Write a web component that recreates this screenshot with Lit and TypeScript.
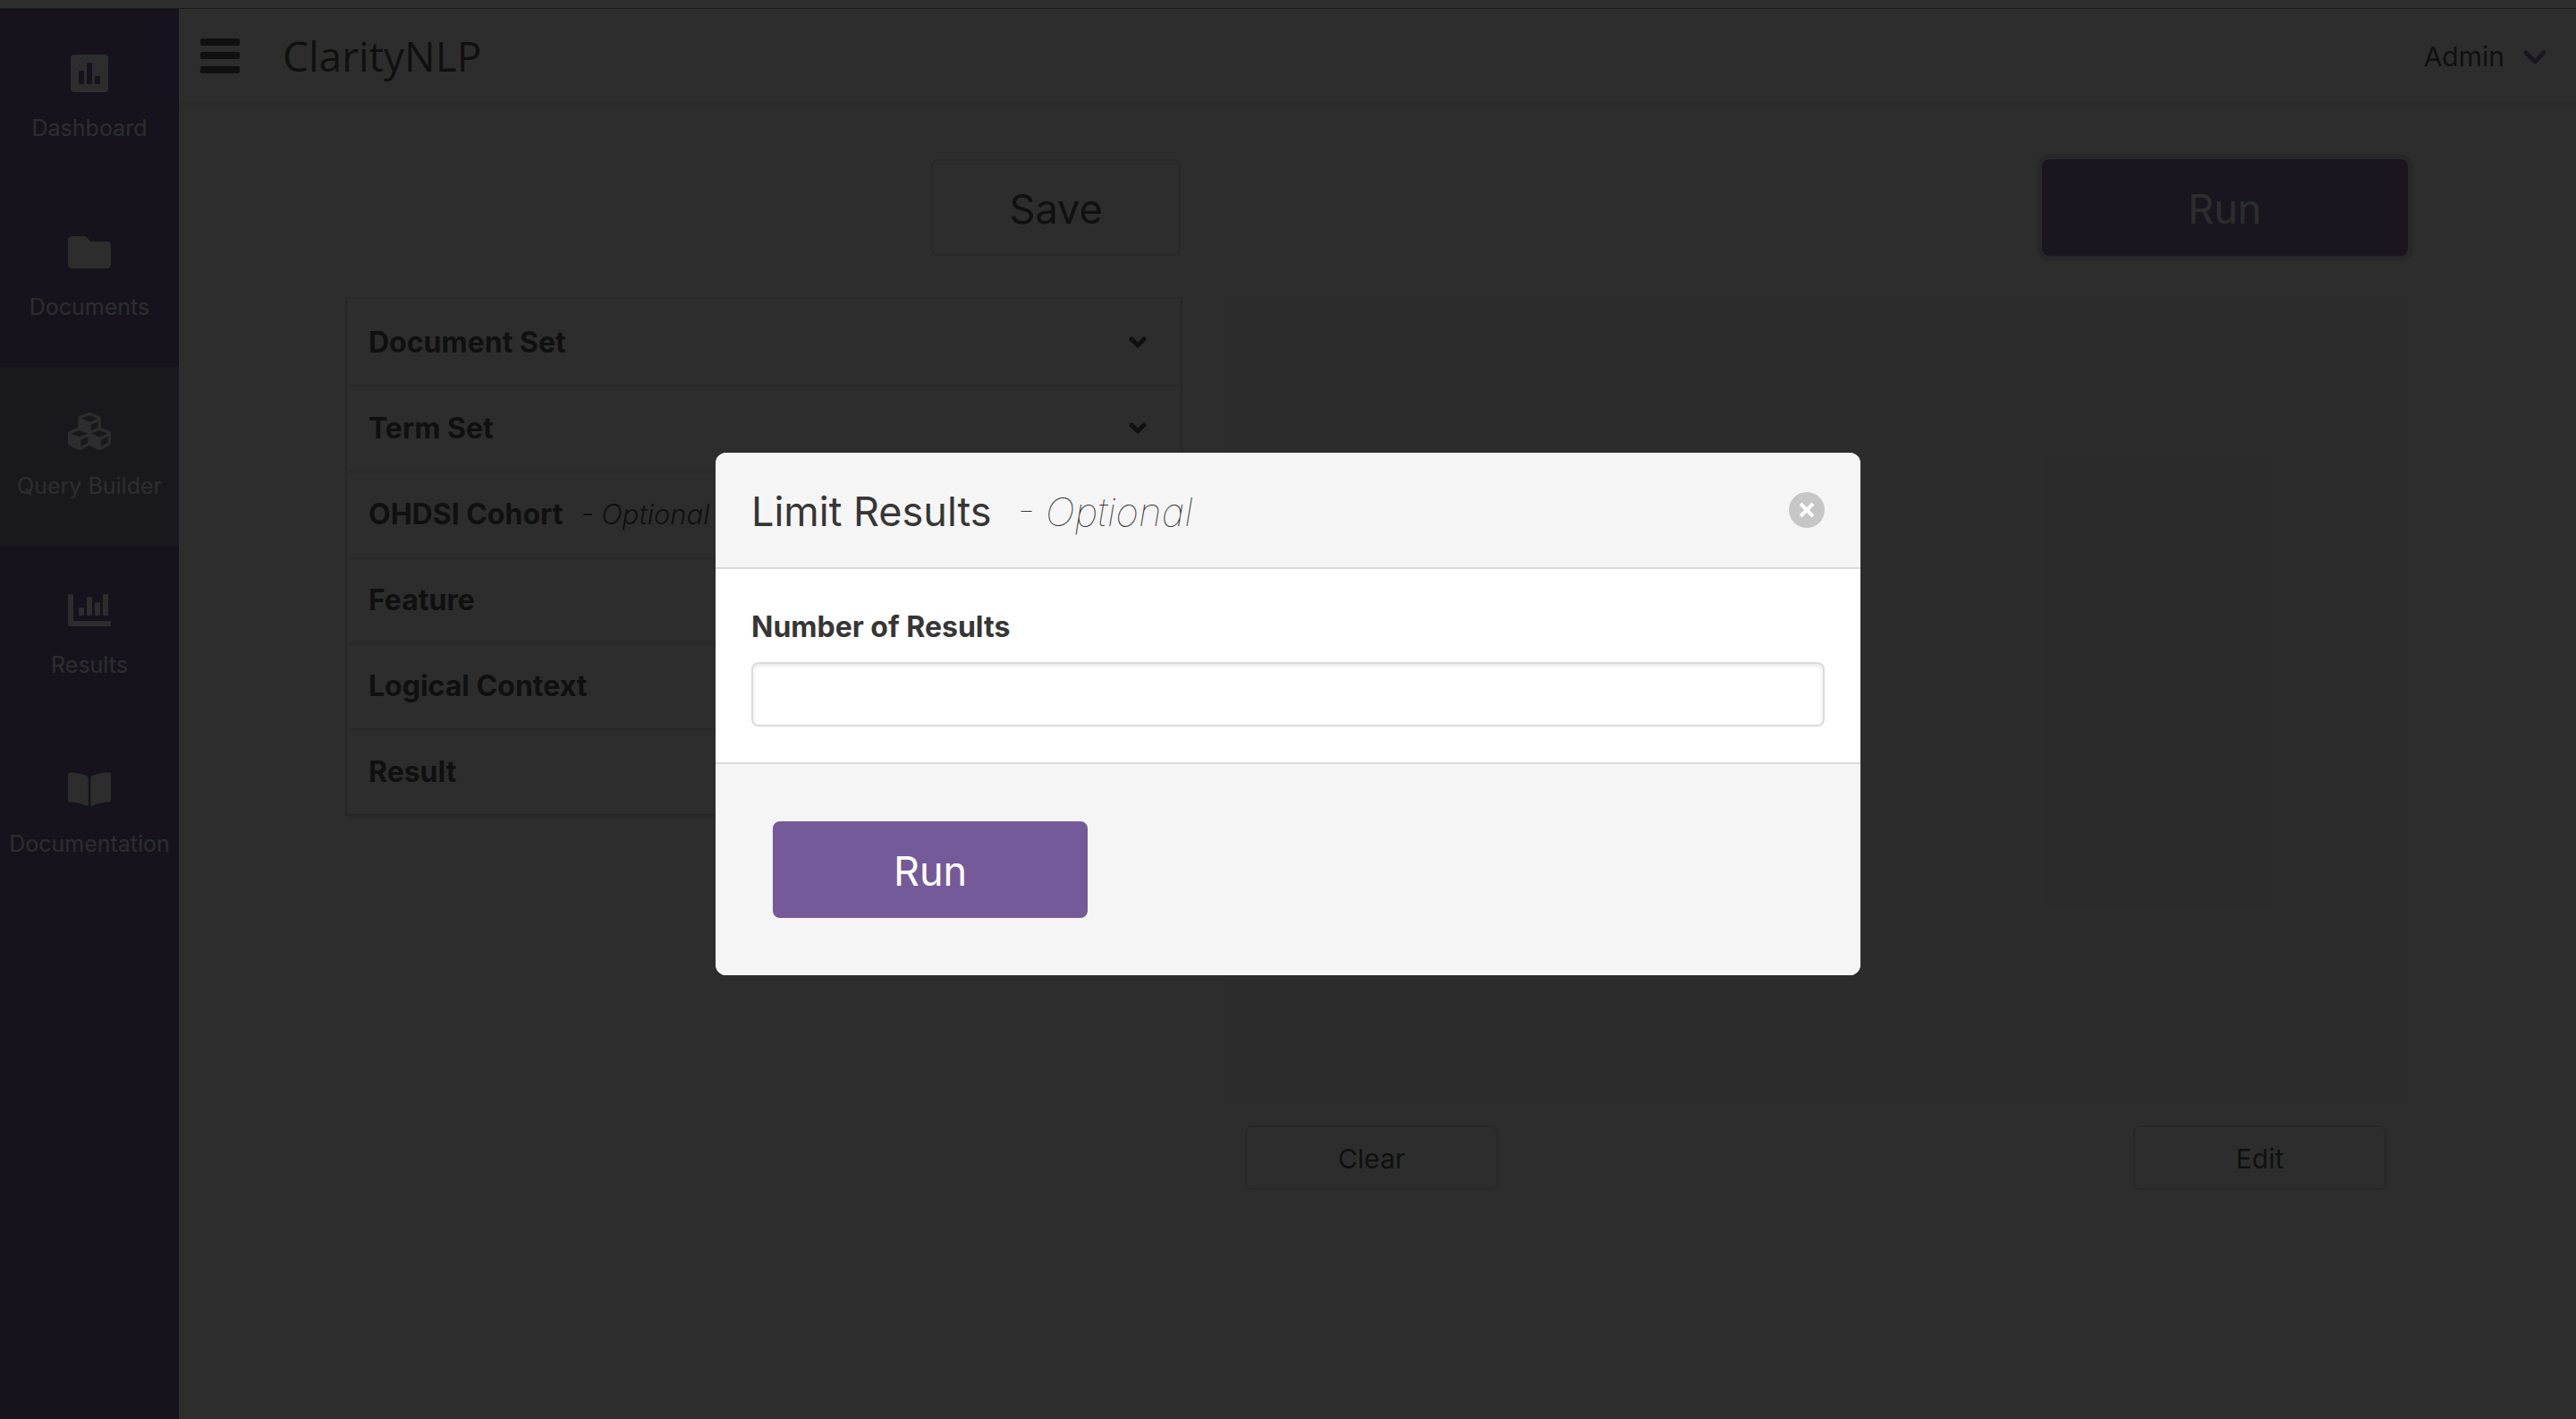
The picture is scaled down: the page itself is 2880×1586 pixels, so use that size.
import { LitElement, html, css, svg, nothing } from "lit";
import { customElement, state } from "lit/decorators.js";

const icons = {
  dashboard: svg`<svg class="icon" viewBox="0 0 48 48" aria-hidden="true">
    <path fill-rule="evenodd" d="M7 3h34a4 4 0 0 1 4 4v34a4 4 0 0 1-4 4H7a4 4 0 0 1-4-4V7a4 4 0 0 1 4-4zM13 21a1 1 0 0 0-1 1v13a1 1 0 0 0 1 1h4a1 1 0 0 0 1-1V22a1 1 0 0 0-1-1zM22 12a1 1 0 0 0-1 1v22a1 1 0 0 0 1 1h4a1 1 0 0 0 1-1V13a1 1 0 0 0-1-1zM31 27a1 1 0 0 0-1 1v7a1 1 0 0 0 1 1h4a1 1 0 0 0 1-1v-7a1 1 0 0 0-1-1z"/></svg>`,
  folder: svg`<svg class="icon" viewBox="0 0 512 512" aria-hidden="true">
    <path d="M464 128H272l-64-64H48C21.49 64 0 85.49 0 112v288c0 26.51 21.49 48 48 48h416c26.51 0 48-21.49 48-48V176c0-26.51-21.49-48-48-48z"/></svg>`,
  cubes: svg`<svg class="icon" viewBox="0 0 512 512" aria-hidden="true">
    <path d="M488.6 250.2L392 214V105.5c0-15-9.3-28.4-23.4-33.7l-100-37.5c-8.1-3.1-17.1-3.1-25.3 0l-100 37.5c-14.1 5.3-23.4 18.7-23.4 33.7V214l-96.6 36.2C9.3 255.5 0 268.9 0 283.9V394c0 13.6 7.7 26.1 19.9 32.2l100 50c10.1 5.1 22.1 5.1 32.2 0l103.9-52 103.9 52c10.1 5.1 22.1 5.1 32.2 0l100-50c12.2-6.1 19.9-18.6 19.9-32.2V283.9c0-15-9.3-28.4-23.4-33.7zM358 214.8l-85 31.9v-68.2l85-37v73.3zM154 104.1l102-38.2 102 38.2v.6l-102 41.4-102-41.4v-.6zm84 291.1l-85 42.5v-79.1l85-38.8v75.4zm0-112l-102 41.4-102-41.4v-.6l102-38.2 102 38.2v.6zm240 112l-85 42.5v-79.1l85-38.8v75.4zm0-112l-102 41.4-102-41.4v-.6l102-38.2 102 38.2v.6z"/></svg>`,
  chart: svg`<svg class="icon" viewBox="0 0 48 48" aria-hidden="true">
    <path d="M1.500 6h3A1.500 1.500 0 0 1 6 7.500V36h40.500a1.500 1.500 0 0 1 1.500 1.500v3a1.500 1.500 0 0 1-1.500 1.500H3a3 3 0 0 1-3-3V7.500A1.500 1.500 0 0 1 1.500 6z"/>
    <rect x="12" y="21" width="6" height="9" rx="1.200"/><rect x="21" y="9" width="6" height="21" rx="1.200"/>
    <rect x="30" y="15" width="6" height="15" rx="1.200"/><rect x="39" y="6" width="6" height="24" rx="1.200"/></svg>`,
  book: svg`<svg class="icon" viewBox="0 0 576 512" aria-hidden="true">
    <path d="M542.22 32.05c-54.8 3.11-163.72 14.43-230.96 55.59-4.64 2.84-7.27 7.89-7.27 13.17v363.87c0 11.55 12.63 18.85 23.28 13.49 69.18-34.82 169.23-44.32 218.7-46.92 16.89-.89 30.02-14.43 30.02-30.66V62.75c.01-17.71-15.35-31.74-33.77-30.7zM264.73 87.64C197.5 46.48 88.58 35.17 33.78 32.05 15.36 31.01 0 45.04 0 62.75V400.6c0 16.24 13.13 29.78 30.02 30.66 49.49 2.6 149.59 12.11 218.77 46.95 10.62 5.35 23.21-1.94 23.21-13.46V100.63c0-5.29-2.62-10.14-7.27-12.99z"/></svg>`,
};

const navItems = [
  { label: "Dashboard", icon: icons.dashboard },
  { label: "Documents", icon: icons.folder },
  { label: "Query Builder", icon: icons.cubes, active: true },
  { label: "Results", icon: icons.chart },
  { label: "Documentation", icon: icons.book },
];

const sections = [
  { title: "Document Set" },
  { title: "Term Set" },
  { title: "OHDSI Cohort", optional: true },
  { title: "Feature" },
  { title: "Logical Context" },
  { title: "Result" },
];

const reset = css`
  * {
    box-sizing: border-box;
  }
  button,
  input {
    font: inherit;
    color: inherit;
    margin: 0;
  }
  button {
    cursor: pointer;
  }
  .button {
    border: 2px solid #dbdbdb;
    border-radius: 8px;
    background: #fff;
    color: #363636;
    padding: 2px 24px 0;
    height: 72px;
    font-size: 30px;
    line-height: 48px;
    text-align: center;
    width: 100%;
  }
  .button.large {
    height: 108px;
    padding-top: 4px;
    font-size: 45px;
    line-height: 72px;
  }
  .button.primary {
    background: #755a99;
    border-color: #755a99;
    color: #fff;
  }
`;

@customElement("side-nav")
class SideNav extends LitElement {
  static styles = [
    reset,
    css`
      :host {
        display: block;
        flex: 0 0 200px;
        background: #5a4a8c;
      }
      .item {
        display: flex;
        flex-direction: column;
        align-items: center;
        gap: 17px;
        height: 200px;
        padding-top: 48px;
        color: #fff;
        font-size: 25px;
        line-height: 40px;
        white-space: nowrap;
        text-decoration: none;
      }
      .item.active {
        background: #756f8f;
      }
      .icon {
        width: 48px;
        height: 48px;
        fill: currentColor;
      }
    `,
  ];

  render() {
    return html`<nav aria-label="Main">
      ${navItems.map(
        (item) => html`<a class="item ${item.active ? "active" : ""}" href="#">
          ${item.icon}<span>${item.label}</span>
        </a>`
      )}
    </nav>`;
  }
}

@customElement("top-bar")
class TopBar extends LitElement {
  static styles = [
    reset,
    css`
      :host {
        display: flex;
        align-items: center;
        height: 104px;
        padding: 0 32px 0 24px;
        background: #fff;
        box-shadow: 0 2px 4px rgba(10, 10, 10, 0.1);
      }
      .menu,
      .user {
        border: 0;
        padding: 0;
        background: none;
      }
      .menu {
        display: flex;
      }
      .bars {
        width: 44px;
        height: 40px;
        fill: #363636;
      }
      .brand {
        margin: 0 auto 0 48px;
        font-family: "Open Sans", sans-serif;
        font-size: 46px;
        font-weight: 400;
        line-height: 56px;
        color: #363636;
      }
      .user {
        display: flex;
        align-items: center;
        gap: 20px;
        padding-top: 2px;
        font-size: 30px;
        color: #363636;
      }
      .caret {
        width: 28px;
        height: 20px;
        fill: none;
        stroke: #755a99;
        stroke-width: 5;
        stroke-linecap: round;
        stroke-linejoin: round;
      }
    `,
  ];

  render() {
    return html`
      <button class="menu" aria-label="Toggle menu">
        <svg class="bars" viewBox="0 0 44 40" aria-hidden="true">
          <rect y="1" width="44" height="8" rx="2" />
          <rect y="16" width="44" height="8" rx="2" />
          <rect y="32" width="44" height="8" rx="2" />
        </svg>
      </button>
      <h1 class="brand">ClarityNLP</h1>
      <button class="user">
        Admin
        <svg class="caret" viewBox="0 0 28 20" aria-hidden="true">
          <path d="M4 6l10 10L24 6" />
        </svg>
      </button>
    `;
  }
}

@customElement("query-sections")
class QuerySections extends LitElement {
  static styles = [
    reset,
    css`
      :host {
        display: block;
        background: #fff;
        box-shadow: 0 4px 6px rgba(10, 10, 10, 0.1), 0 0 0 2px rgba(10, 10, 10, 0.1);
      }
      .section {
        display: flex;
        align-items: center;
        width: 100%;
        height: 96px;
        padding: 2px 38px 0 24px;
        border: 0;
        background: none;
        box-shadow: 0 2px 4px rgba(10, 10, 10, 0.14);
        color: #363636;
        font-weight: 700;
        line-height: 48px;
        text-align: left;
      }
      .optional {
        margin-left: 20px;
        font-size: 31px;
        font-style: italic;
        font-weight: 300;
      }
      .angle {
        width: 20px;
        height: 14px;
        margin-left: auto;
        fill: none;
        stroke: currentColor;
        stroke-width: 5;
        stroke-linecap: round;
        stroke-linejoin: round;
      }
    `,
  ];

  render() {
    return sections.map(
      (s) => html`<button class="section" aria-expanded="false">
        <span>${s.title}</span>
        ${s.optional ? html`<span class="optional">- Optional</span>` : nothing}
        <svg class="angle" viewBox="0 0 20 14" aria-hidden="true">
          <path d="M3 3l7 7 7-7" />
        </svg>
      </button>`
    );
  }
}

@customElement("limit-dialog")
class LimitDialog extends LitElement {
  static styles = [
    reset,
    css`
      :host {
        position: absolute;
        inset: 0;
        display: flex;
        align-items: center;
        justify-content: center;
        background: rgba(10, 10, 10, 0.86);
      }
      .card {
        width: 1280px;
        max-width: calc(100% - 80px);
        border-radius: 12px;
        overflow: hidden;
        background: #fff;
        color: #363636;
      }
      .head,
      .foot {
        background: #f5f5f5;
      }
      .head {
        display: flex;
        align-items: center;
        justify-content: space-between;
        padding: 40px;
        border-bottom: 2px solid #dbdbdb;
      }
      .title {
        margin: 0;
        padding-top: 4px;
        font-size: 45px;
        font-weight: 400;
        line-height: 44px;
      }
      .optional {
        margin-left: 16px;
        font-size: 44px;
        font-style: italic;
        font-weight: 100;
      }
      .close {
        display: flex;
        width: 40px;
        height: 40px;
        padding: 0;
        border: 0;
        border-radius: 50%;
        background: #c6c6c6;
      }
      .cross {
        width: 40px;
        height: 40px;
        stroke: #fff;
        stroke-width: 4;
      }
      .body {
        display: flex;
        flex-direction: column;
        gap: 16px;
        padding: 40px;
      }
      .label {
        padding-top: 2px;
        font-weight: 700;
        line-height: 46px;
      }
      .input {
        width: 100%;
        height: 72px;
        padding: 0 20px;
        border: 2px solid #dbdbdb;
        border-radius: 8px;
        background: #fff;
        box-shadow: inset 0 2px 4px rgba(10, 10, 10, 0.1);
      }
      .foot {
        display: grid;
        grid-template-columns: repeat(3, 1fr);
        gap: 48px;
        padding: 64px;
        border-top: 2px solid #dbdbdb;
      }
    `,
  ];

  private close() {
    this.dispatchEvent(new CustomEvent("dismiss"));
  }

  render() {
    return html`<form class="card" role="dialog" aria-labelledby="title" @submit=${(e: Event) => e.preventDefault()}>
      <header class="head">
        <h2 class="title" id="title">Limit Results <span class="optional">- Optional</span></h2>
        <button class="close" type="button" aria-label="Close" @click=${this.close}>
          <svg class="cross" viewBox="0 0 40 40" aria-hidden="true">
            <path d="M13 13l14 14M27 13L13 27" />
          </svg>
        </button>
      </header>
      <div class="body">
        <label class="label" for="limit">Number of Results</label>
        <input class="input" id="limit" type="text" inputmode="numeric" />
      </div>
      <footer class="foot">
        <button class="button large primary" type="submit">Run</button>
      </footer>
    </form>`;
  }
}

@customElement("app-root")
class AppRoot extends LitElement {
  @state() private dialogOpen = true;

  static styles = [
    reset,
    css`
      :host {
        display: flex;
        flex-direction: column;
        min-height: 100vh;
        background: #fff;
        color: #363636;
        font-family: Inter, "Liberation Sans", sans-serif;
        font-size: 32px;
        line-height: 48px;
      }
      .strip {
        height: 10px;
        background: #2e2e2e;
        border-bottom: 1px solid #1c1c1c;
      }
      .page {
        position: relative;
        display: flex;
        flex: 1;
      }
      .main {
        flex: 1;
        min-width: 0;
      }
      .content {
        display: grid;
        grid-template-columns: 932fr 1324fr;
        gap: 48px;
        align-items: start;
        max-width: 2304px;
        margin: 64px auto 0;
      }
      .column {
        display: flex;
        flex-direction: column;
        gap: 48px;
      }
      .actions {
        display: grid;
        grid-template-columns: repeat(3, 1fr);
        gap: 48px;
      }
      .last {
        grid-column: -2;
      }
      .focused {
        box-shadow: 0 0 0 6px rgba(117, 90, 153, 0.25);
      }
      .editor {
        display: flex;
        flex-direction: column;
        gap: 24px;
      }
      .query {
        height: 900px;
        background: #f6f6f6;
      }
      .tools {
        display: grid;
        grid-template-columns: repeat(4, 1fr);
        gap: 48px;
        padding: 0 24px;
      }
    `,
  ];

  render() {
    return html`
      <div class="strip"></div>
      <div class="page">
        <side-nav></side-nav>
        <main class="main">
          <top-bar></top-bar>
          <div class="content">
            <div class="column">
              <div class="actions"><button class="button large last">Save</button></div>
              <query-sections></query-sections>
            </div>
            <div class="column">
              <div class="actions">
                <button class="button large primary last focused" @click=${() => (this.dialogOpen = true)}>Run</button>
              </div>
              <div class="editor">
                <div class="query"></div>
                <div class="tools">
                  <button class="button">Clear</button>
                  <button class="button last">Edit</button>
                </div>
              </div>
            </div>
          </div>
        </main>
        ${this.dialogOpen
          ? html`<limit-dialog @dismiss=${() => (this.dialogOpen = false)}></limit-dialog>`
          : nothing}
      </div>
    `;
  }
}
